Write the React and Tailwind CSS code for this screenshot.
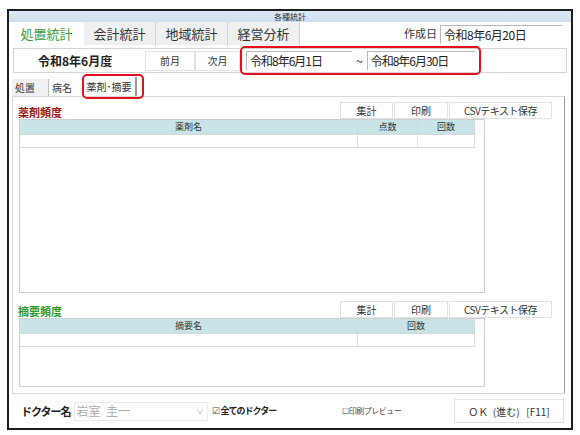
import React from "react";

// 各種統計 window: statistics dialog with tab rows, period picker and two frequency lists
const jp = { fontFamily: '"Noto Sans CJK JP", "Noto Sans", sans-serif' };

function TopTab({ label, active }) {
  return active ? (
    <div className="flex w-[75px] items-center justify-center text-[13px] text-[#3b9a3b]">{label}</div>
  ) : (
    <div className="flex w-[72px] items-center justify-center border-r border-[#d0d0d0] bg-[#f0f0f0] text-[13px] text-[#333]">
      {label}
    </div>
  );
}

function DateField({ value, width }) {
  return (
    <div
      className="flex h-[19px] items-center border-t border-l border-[#b8b8b8] bg-white pl-[3px] text-[12px] tracking-[-1px] text-[#222]"
      style={{ width }}
    >
      {value}
    </div>
  );
}

function ToolButtons() {
  return (
    <div className="flex gap-[1px]">
      <div className="flex h-[17px] w-[53px] items-center justify-center border border-[#e2e2e2] text-[10px] text-[#333]">集計</div>
      <div className="flex h-[17px] w-[54px] items-center justify-center border border-[#e2e2e2] text-[10px] text-[#333]">印刷</div>
      <div className="flex h-[17px] w-[103px] items-center justify-center border border-[#e2e2e2] text-[10px] tracking-[-0.5px] text-[#333]">CSVテキスト保存</div>
    </div>
  );
}

function SectionHead({ title, color }) {
  return (
    <div className="flex h-[17px] items-start justify-between pr-[12px]">
      <span className="ml-[5px] mt-[5px] text-[11px] font-bold leading-none" style={{ color }}>
        {title}
      </span>
      <ToolButtons />
    </div>
  );
}

function ListBox({ cols, height }) {
  return (
    <div className="ml-[6px] w-[466px] border border-[#cfcfcf] bg-white" style={{ height }}>
      <div className="flex w-[455px] border-b border-[#d8d8d8]">
        {cols.map((c) => (
          <div
            key={c.name}
            className="flex h-[14px] items-center justify-center border-r border-[#d8d8d8] bg-[#c9e4e6] text-[9px] text-[#333]"
            style={{ width: c.w }}
          >
            {c.name}
          </div>
        ))}
      </div>
      <div className="flex w-[455px] border-b border-[#dcdcdc]">
        {cols.map((c) => (
          <div key={c.name} className="h-[12px] border-r border-[#e0e0e0]" style={{ width: c.w }} />
        ))}
      </div>
    </div>
  );
}

export default function App() {
  return (
    <div className="h-[435px] w-[580px] bg-white pt-[9px] pl-[7px]" style={jp}>
      <div className="relative flex h-[421px] w-[566px] flex-col border-2 border-[#1e1e1e] bg-white">
        {/* title bar */}
        <div className="flex h-[11px] items-center justify-center bg-gradient-to-b from-[#dce8f4] to-[#cfdfee] text-[8px] leading-none text-[#333]">
          各種統計
        </div>

        {/* main tabs + 作成日 */}
        <div className="flex h-[23px]">
          <TopTab label="処置統計" active />
          <TopTab label="会計統計" />
          <TopTab label="地域統計" />
          <TopTab label="経営分析" />
          <div className="ml-auto mr-[9px] flex items-center gap-[3px]">
            <span className="text-[11px] text-[#333]">作成日</span>
            <div className="mt-[2px] flex h-[19px] w-[122px] items-center border-t border-l border-[#b8b8b8] pl-[3px] text-[12px] tracking-[-0.5px] text-[#222]">
              令和8年6月20日
            </div>
          </div>
        </div>

        {/* period row */}
        <div className="mx-[4px] mt-[3px] flex h-[25px] items-center border border-[#d4d4d4]">
          <div className="w-[125px] pl-[24px] text-[12px] font-bold text-[#222]">令和8年6月度</div>
          <div className="ml-[6px] flex h-[20px] w-[50px] items-center justify-center border border-[#e2e2e2] text-[10px] text-[#333]">前月</div>
          <div className="flex h-[20px] w-[45px] items-center justify-center border border-[#e2e2e2] text-[10px] text-[#333]">次月</div>
          <div className="ml-[6px] flex items-center">
            <DateField value="令和8年6月1日" width="106px" />
            <span className="mx-[4px] text-[12px] text-[#222]">~</span>
            <DateField value="令和8年6月30日" width="108px" />
          </div>
        </div>
        <div className="absolute top-[35px] left-[231px] h-[29px] w-[241px] rounded-[5px] border-2 border-[#e4101b]" />

        {/* sub tabs */}
        <div className="ml-[3px] mt-[4px] flex h-[19px] items-end">
          <div className="flex h-[17px] w-[37px] items-center justify-start border-r border-[#bdbdbd] bg-[#f0f0f0] pl-[3px] text-[10px] text-[#333]">処置</div>
          <div className="flex h-[17px] w-[30px] items-center pl-[3px] text-[10px] text-[#333]">病名</div>
          <div className="ml-[4px] flex h-[19px] w-[54px] items-center justify-center border-r-2 border-[#9a9a9a] text-[10px] text-[#333]">薬剤･摘要</div>
        </div>
        <div className="absolute top-[63px] left-[73px] h-[25px] w-[62px] rounded-[5px] border-2 border-[#e4101b]" />

        {/* content panel */}
        <div className="ml-[3px] mr-[6px] flex h-[298px] flex-col border border-[#dadada] border-r-[#9c9c9c]">
          <div className="mt-[5px]">
            <SectionHead title="薬剤頻度" color="#9c1a1a" />
          </div>
          <ListBox
            height="174px"
            cols={[
              { name: "薬剤名", w: "338px" },
              { name: "点数", w: "60px" },
              { name: "回数", w: "57px" },
            ]}
          />
          <div className="mt-[8px]">
            <SectionHead title="摘要頻度" color="#2f9a2f" />
          </div>
          <ListBox
            height="69px"
            cols={[
              { name: "摘要名", w: "338px" },
              { name: "回数", w: "117px" },
            ]}
          />
        </div>

        {/* doctor select + OK */}
        <div className="flex flex-1 items-center pl-[12px] pr-[7px]">
          <span className="text-[11px] font-bold tracking-[-1px] text-[#222]">ドクター名</span>
          <div className="ml-[3px] flex h-[19px] w-[134px] items-center justify-between border border-[#ececec] pl-[2px] pr-[3px] text-[12px] text-[#aaa]">
            <span>岩室&nbsp;&nbsp;圭一</span>
            <span className="text-[7px] text-[#999]">∨</span>
          </div>
          <span className="ml-[4px] text-[9px] text-[#444]">☑</span>
          <span className="ml-[1px] text-[9px] font-bold tracking-[-1px] text-[#222]">全てのドクター</span>
          <span className="ml-[66px] text-[8px] tracking-[-0.5px] text-[#444]">☐印刷プレビュー</span>
          <div className="ml-auto flex h-[24px] w-[110px] items-center justify-center border border-[#e2e2e2] text-[10px] text-[#333]">
            ＯＫ&nbsp;&nbsp;(進む)&nbsp;&nbsp;&nbsp;[F11]
          </div>
        </div>
      </div>
    </div>
  );
}
